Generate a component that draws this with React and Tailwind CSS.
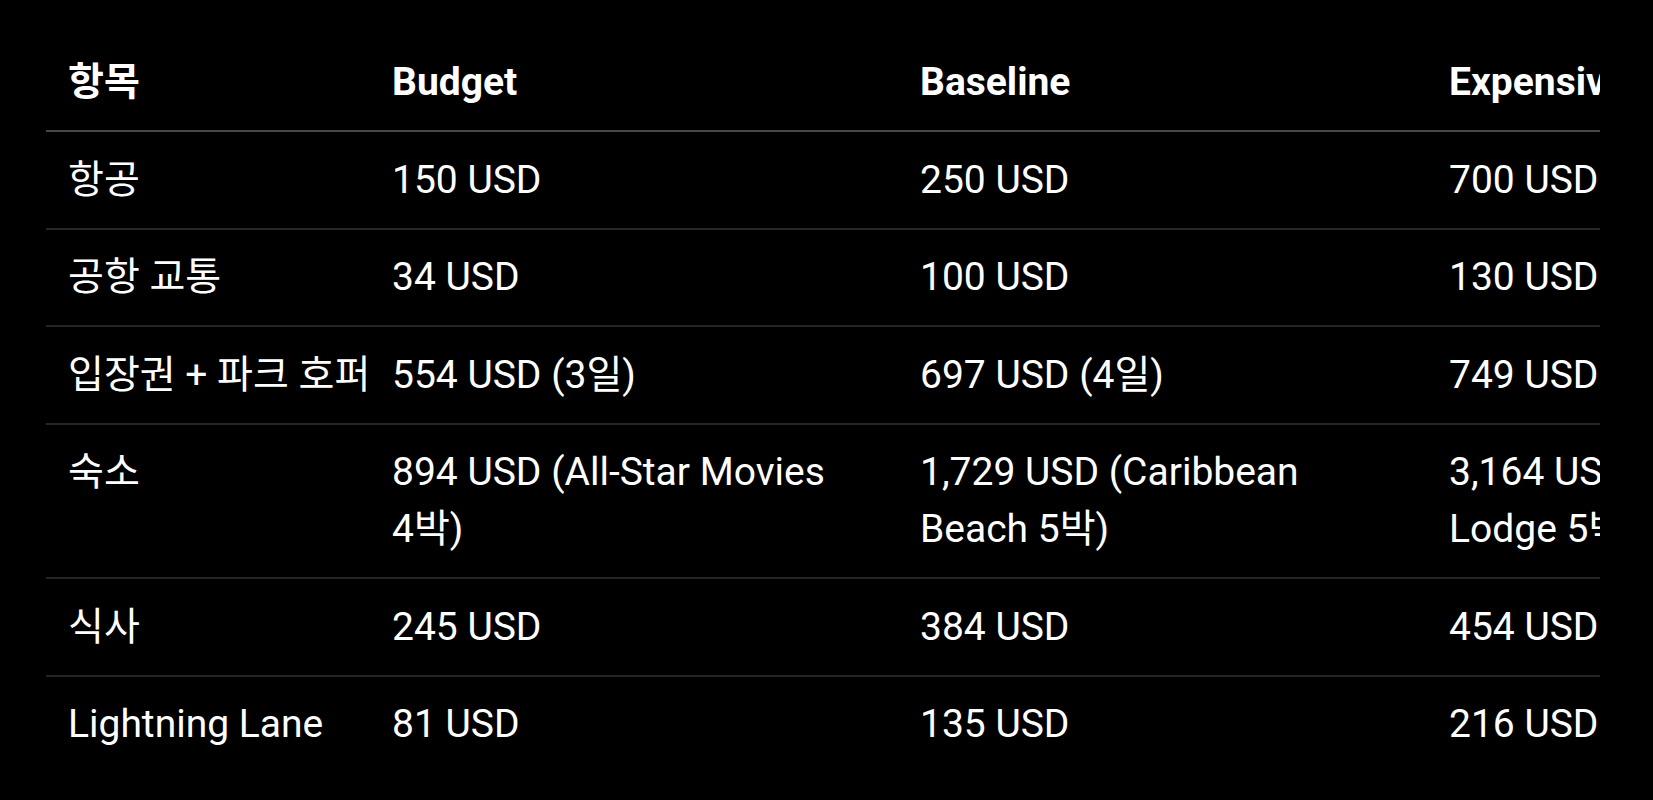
const columns = ['항목', 'Budget', 'Baseline', 'Expensive']

const rows = [
  ['항공', '150 USD', '250 USD', '700 USD'],
  ['공항 교통', '34 USD', '100 USD', '130 USD'],
  ['입장권 + 파크 호퍼', '554 USD (3일)', '697 USD (4일)', '749 USD (5일)'],
  ['숙소', '894 USD (All-Star Movies 4박)', '1,729 USD (Caribbean Beach 5박)', '3,164 USD (Wilderness Lodge 5박)'],
  ['식사', '245 USD', '384 USD', '454 USD'],
  ['Lightning Lane', '81 USD', '135 USD', '216 USD'],
]

const font = { fontFamily: 'Roboto, "Noto Sans CJK KR", sans-serif' }

export default function App() {
  return (
    <div className="min-h-screen bg-black pt-[35px]" style={font}>
      <div className="ml-[46px] w-[1554px] overflow-hidden">
        <table className="table-fixed border-collapse w-[1909px] text-left text-white text-[39px] leading-[57px] break-keep">
          <colgroup>
            <col className="w-[324px]" />
            <col className="w-[528px]" />
            <col className="w-[529px]" />
            <col className="w-[528px]" />
          </colgroup>
          <thead>
            <tr>
              {columns.map((c) => (
                <th key={c} className="pl-[22px] pr-[22px] py-[19px] font-bold whitespace-nowrap border-b-2 border-[#474747] align-top">
                  {c}
                </th>
              ))}
            </tr>
          </thead>
          <tbody>
            {rows.map((r, i) => (
              <tr key={r[0]}>
                {r.map((cell, j) => (
                  <td
                    key={j}
                    className={`pl-[22px] pr-[22px] pt-[19.5px] pb-[19px] font-normal align-top ${i < rows.length - 1 ? 'border-b-2 border-[#262626]' : ''} ${j === 0 ? 'whitespace-nowrap' : ''}`}
                  >
                    {cell}
                  </td>
                ))}
              </tr>
            ))}
          </tbody>
        </table>
      </div>
    </div>
  )
}
